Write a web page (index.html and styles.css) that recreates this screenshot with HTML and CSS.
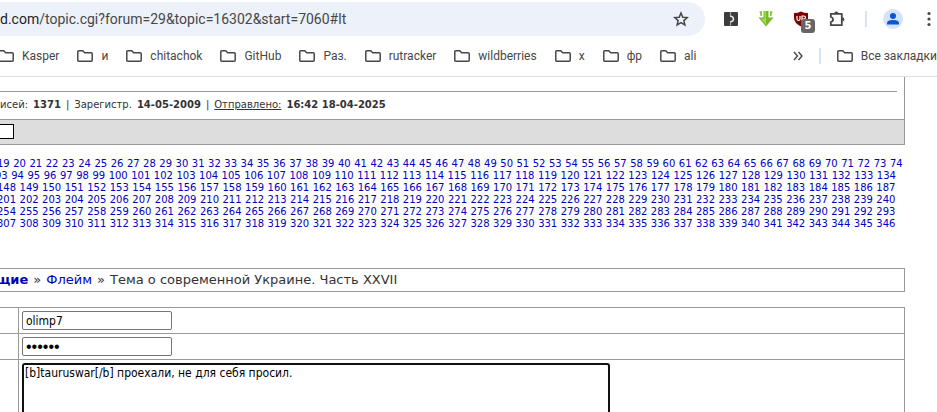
FILE: index.html
```
<!DOCTYPE html>
<html lang="ru">
<head>
<meta charset="utf-8">
<title>Тема о современной Украине. Часть XXVII</title>
<link rel="stylesheet" href="styles.css">
</head>
<body>
<svg class="defs" aria-hidden="true">
  <symbol id="folder" viewBox="0 0 16 12"><path d="M1.700.8h4.100l1.800 1.900h6.700q.9 0 .9.9v6.700q0 .9-.9.9H1.700q-.9 0-.9-.9V1.700q0-.9.9-.9z" fill="none" stroke="#474747" stroke-width="1.500"/></symbol>
</svg>
<header class="browser">
  <div class="toolbar">
    <div class="address">
      <span class="url"><span class="host">d.com</span>/topic.cgi?forum=29&amp;topic=16302&amp;start=7060#lt</span>
      <button class="icon" aria-label="Добавить закладку"><svg width="16" height="16" viewBox="0 0 16 16"><path d="M8 2l1.800 4.200 4.500.4-3.400 3 1 4.400L8 11.700 4.100 14l1-4.400-3.400-3 4.500-.4z" fill="none" stroke="#474747" stroke-width="1.500"/></svg></button>
    </div>
    <div class="actions">
      <button class="icon" aria-label="Расширение"><svg width="16" height="16" viewBox="0 0 16 16"><rect x="1" y="1" width="14" height="14" rx="1" fill="#3c3c3c"/><path d="M7.500 1v3.500M7.500 11.500V15" stroke="#999" stroke-width="1.200"/><path d="M7 5q3.500.5 3.500 3T7 11" fill="none" stroke="#e4e4e4" stroke-width="1.500"/></svg></button>
      <button class="icon" aria-label="Загрузки"><svg width="16" height="16" viewBox="0 0 16 16"><path d="M5.500 0h5v6.500h5L8 15.500.5 6.500h5z" fill="#76b82a"/><path d="M1.500.5L4 0v5H2.500zM14.500.5L12 0v5h1.500z" fill="#8cc63f"/><path d="M6.500 0v8L3 7.500l5 6.500V0z" fill="#a5d84c"/></svg></button>
      <button class="icon shield" aria-label="uBlock"><svg width="16" height="16" viewBox="0 0 16 16"><path d="M8 .5q3 1.500 7 1.500v5q0 5-7 8.500Q1 12 1 7V2q4 0 7-1.500z" fill="#800000"/><path d="M4 5v3q0 1.500 1.500 1.500T7 8V5M9 10V5h1.500q2 0 2 1.500T10.500 8H9" fill="none" stroke="#fff" stroke-width="1.200"/></svg><span class="count">5</span></button>
      <button class="icon" aria-label="Расширения"><svg width="18" height="18" viewBox="0 0 18 18"><path d="M2.800 3.800h11v11.400h-11v-3.200q2.200-.6 2.200-2.500t-2.200-2.500z" fill="none" stroke="#474747" stroke-width="1.800" stroke-linejoin="round"/><path d="M6.200 3.500a2.100 2.100 0 0 1 4.200 0zM14.300 7.300a2.100 2.100 0 0 1 0 4.200z" fill="#474747"/></svg></button>
      <div class="account">
        <span class="divider"></span>
        <button class="icon" aria-label="Профиль"><svg width="20" height="20" viewBox="0 0 20 20"><circle cx="10" cy="10" r="10" fill="#d3e3fd"/><circle cx="10" cy="6.900" r="3" fill="#0b57d0"/><path d="M4 15.500v-1.500q0-3 6-3t6 3v1.500z" fill="#0b57d0"/></svg></button>
      </div>
      <button class="icon menu" aria-label="Меню"><svg width="4" height="16" viewBox="0 0 4 16" fill="#474747"><circle cx="2" cy="2.500" r="1.600"/><circle cx="2" cy="8" r="1.600"/><circle cx="2" cy="13.500" r="1.600"/></svg></button>
    </div>
  </div>
  <nav class="bookmarks">
    <div class="items">
      <a href="#"><svg><use href="#folder"/></svg>Kasper</a>
      <a href="#"><svg><use href="#folder"/></svg>и</a>
      <a href="#"><svg><use href="#folder"/></svg>chitachok</a>
      <a href="#"><svg><use href="#folder"/></svg>GitHub</a>
      <a href="#"><svg><use href="#folder"/></svg>Раз.</a>
      <a href="#"><svg><use href="#folder"/></svg>rutracker</a>
      <a href="#"><svg><use href="#folder"/></svg>wildberries</a>
      <a href="#"><svg><use href="#folder"/></svg>х</a>
      <a href="#"><svg><use href="#folder"/></svg>фр</a>
      <a href="#"><svg><use href="#folder"/></svg>ali</a>
    </div>
    <div class="rest">
      <button class="icon" aria-label="Другие закладки"><svg width="10" height="10" viewBox="0 0 10 10"><path d="M1 1l3.500 4L1 9M5.500 1L9 5 5.500 9" fill="none" stroke="#474747" stroke-width="1.400"/></svg></button>
      <span class="divider"></span>
      <a href="#"><svg><use href="#folder"/></svg>Все закладки</a>
    </div>
  </nav>
</header>
<main class="page">
  <section class="post">
    <p class="meta"><span>исей:</span><b>1371</b><span>|</span><span>Зарегистр.</span><b>14-05-2009</b><span>|</span><a href="#">Отправлено:</a><b>16:42 18-04-2025</b></p>
    <div class="strip"><span class="swatch"></span></div>
  </section>
  <nav class="pager" id="pager" aria-label="Страницы"></nav>
  <p class="crumbs"><a href="#"><b>щие</b></a><span>»</span><a href="#">Флейм</a><span>»</span><span>Тема о современной Украине. Часть XXVII</span></p>
  <form class="reply">
    <span class="label"></span>
    <div class="field"><input type="text" aria-label="Имя" value="olimp7"></div>
    <span class="label"></span>
    <div class="field"><input class="secret" type="password" aria-label="Пароль" value="secret"></div>
    <span class="label"></span>
    <div class="field"><textarea aria-label="Сообщение">[b]tauruswar[/b] проехали, не для себя просил.</textarea></div>
  </form>
</main>
<script src="pager.js"></script>
</body>
</html>
```
FILE: styles.css
```
* { box-sizing: border-box; }
body { margin: 0; height: 100vh; overflow: hidden; display: flex; flex-direction: column; background: #fff; color: #333; font-family: "DejaVu Sans", sans-serif; }
p { margin: 0; }
.defs { position: absolute; width: 0; height: 0; }
.browser { border-bottom: 1px solid #dfdfdf; font-family: Roboto, sans-serif; color: #474747; }
.toolbar { display: flex; align-items: center; padding-top: 2px; }
.address { flex: 1; display: flex; align-items: center; justify-content: space-between; height: 34px; padding-right: 16px; background: #ecf1fa; border-radius: 0 17px 17px 0; font-size: 14px; }
.host { color: #1f1f1f; }
.icon { display: flex; align-items: center; justify-content: center; position: relative; border: 0; padding: 0; background: none; }
.actions { display: flex; align-items: center; gap: 19px; padding: 0 6px 0 18px; }
.account { display: flex; align-items: center; gap: 16px; }
.menu { margin-left: 5px; }
.count { position: absolute; left: 8px; top: 8px; width: 14px; height: 14px; border-radius: 3px; background: #666; color: #fff; font: bold 10px/14px "DejaVu Sans", sans-serif; text-align: center; }
.divider { width: 2px; height: 16px; background: #d3e3fd; }
.bookmarks { display: flex; align-items: center; justify-content: space-between; height: 40px; font-size: 12px; }
.bookmarks a { display: flex; align-items: center; gap: 8px; color: inherit; text-decoration: none; white-space: nowrap; }
.bookmarks a svg { width: 16px; height: 12px; }
.items { display: flex; gap: 18px; margin-left: -2px; }
.rest { display: flex; align-items: center; gap: 16px; }
.page { flex: 1; display: flex; flex-direction: column; min-height: 0; padding-right: 32px; }
.post { border-right: 1px solid #999; border-bottom: 1px solid #999; padding-top: 14px; }
.meta { display: flex; gap: 5px; margin-right: 7px; border-top: 1px solid #999; padding: 6px 0 8px; font-size: 10px; line-height: 13px; }
.meta a { color: inherit; }
.strip { display: flex; align-items: center; height: 25px; border-top: 1px solid #999; background: #ddd; }
.swatch { width: 14px; height: 15px; margin-bottom: 2px; border: 1px solid #000; border-left: 0; background: #fff; }
.pager { padding: 13px 0 38px; font-size: 10px; line-height: 12px; }
.row { display: flex; justify-content: space-between; margin: 0 9px 0 -3px; }
.row:first-child { margin-right: 2px; }
.row:nth-child(2) { margin-left: -5px; }
.pager a, .crumbs a { color: #0000bb; text-decoration: none; }
.crumbs { display: flex; gap: 5px; margin-left: -5px; border: 1px solid #999; padding: 3px 0; font-size: 13px; line-height: 16px; }
.reply { flex: 1; display: grid; grid-template: 26px 26px 1fr / 19px 1fr; min-height: 0; margin-top: 15px; border-top: 1px solid #999; border-right: 1px solid #999; }
.label { border-right: 1px solid #999; border-bottom: 1px solid #999; }
.field { display: flex; min-height: 0; padding: 3px; border-bottom: 1px solid #999; }
.label:nth-last-child(2), .field:last-child { border-bottom: 0; padding-bottom: 0; }
input, textarea { border: 1px solid #767676; border-radius: 2px; font: 12px/15px "DejaVu Sans Condensed", "DejaVu Sans", sans-serif; color: #000; background: #fff; outline: 0; }
input { width: 150px; height: 19px; padding: 0 3px; }
.secret { font-family: "Liberation Sans", sans-serif; font-size: 16px; }
textarea { width: 588px; padding: 1px; border: 2px solid #101010; border-bottom: 0; border-radius: 3px 3px 0 0; resize: none; }
```
FILE: pager.js
```
// First and last page number of each row of the page list.
const rows = [[19, 74], [93, 134], [148, 187], [201, 240], [254, 293], [307, 346]];
const pager = document.getElementById("pager");
for (const [first, last] of rows) {
  const row = document.createElement("div");
  row.className = "row";
  for (let n = first; n <= last; n++) {
    const link = document.createElement("a");
    link.href = "#" + n;
    link.textContent = n;
    row.append(link, " ");
  }
  pager.append(row);
}
```
